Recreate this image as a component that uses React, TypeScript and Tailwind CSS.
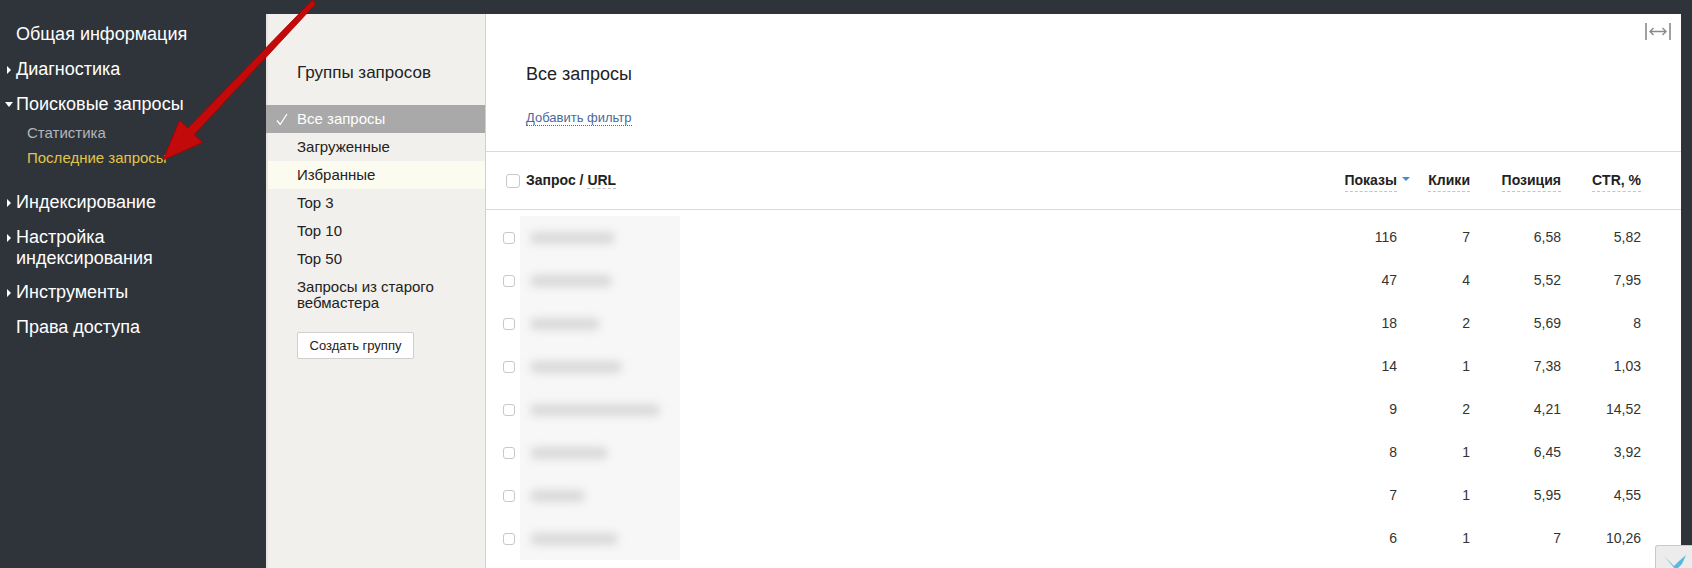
import React from 'react'

const rows = [
  { shows: '116', clicks: '7', pos: '6,58', ctr: '5,82', bar: 85 },
  { shows: '47', clicks: '4', pos: '5,52', ctr: '7,95', bar: 82 },
  { shows: '18', clicks: '2', pos: '5,69', ctr: '8', bar: 70 },
  { shows: '14', clicks: '1', pos: '7,38', ctr: '1,03', bar: 92 },
  { shows: '9', clicks: '2', pos: '4,21', ctr: '14,52', bar: 130 },
  { shows: '8', clicks: '1', pos: '6,45', ctr: '3,92', bar: 78 },
  { shows: '7', clicks: '1', pos: '5,95', ctr: '4,55', bar: 55 },
  { shows: '6', clicks: '1', pos: '7', ctr: '10,26', bar: 88 },
]

function Arrow({ open }: { open?: boolean }) {
  return (
    <span className="w-[16px] h-[21px] shrink-0 flex items-center pl-[7px]">
      {open ? (
        <span className="w-0 h-0 border-x-[4px] border-x-transparent border-t-[5px] border-t-white -ml-[2px]" />
      ) : (
        <span className="w-0 h-0 border-y-[4px] border-y-transparent border-l-[4px] border-l-white" />
      )}
    </span>
  )
}

function NavItem({ children, arrow, open, className = '' }: { children: React.ReactNode; arrow?: boolean; open?: boolean; className?: string }) {
  return (
    <div className={`flex items-start text-[18px] leading-[21px] text-white ${className}`}>
      {arrow ? <Arrow open={open} /> : <span className="w-[16px] shrink-0" />}
      <span>{children}</span>
    </div>
  )
}

function Checkbox({ size = 14 }: { size?: number }) {
  return (
    <span
      className={`shrink-0 rounded-[3px] border border-[#c8c8c8] bg-white ${size === 14 ? 'w-[14px] h-[14px]' : 'w-[12px] h-[12px]'}`}
    />
  )
}

export default function App() {
  return (
    <div className="relative flex h-[568px] w-[1692px] overflow-hidden bg-[#2f343b] font-['Liberation_Sans',Arial,sans-serif]">
      {/* sidebar */}
      <div className="w-[266px] shrink-0 pt-[24px]">
        <NavItem>Общая информация</NavItem>
        <NavItem arrow className="mt-[14px]">Диагностика</NavItem>
        <NavItem arrow open className="mt-[14px]">Поисковые запросы</NavItem>
        <div className="pl-[27px] mt-[9px] text-[15px] leading-[18px] text-[#b3b6ba]">Статистика</div>
        <div className="pl-[27px] mt-[7px] text-[15px] leading-[18px] text-[#e3c548]">Последние запросы</div>
        <NavItem arrow className="mt-[25px]">Индексирование</NavItem>
        <NavItem arrow className="mt-[14px]">
          Настройка
          <br />
          индексирования
        </NavItem>
        <NavItem arrow className="mt-[13px]">Инструменты</NavItem>
        <NavItem className="mt-[14px]">Права доступа</NavItem>
      </div>

      <div className="flex flex-1 pt-[14px] pr-[11px]">
        {/* groups panel */}
        <div className="w-[220px] shrink-0 bg-[#f1f0ec] border-l-2 border-l-[#e6e5e1] border-r border-r-[#cfcfcf] text-[#222]">
          <div className="pl-[29px] pt-[49px] text-[17px] leading-[20px]">Группы запросов</div>
          <div className="mt-[22px] text-[15px]">
            <div className="relative h-[28px] flex items-center bg-[#a9a9a9] text-white -ml-[2px] pl-[31px]">
              <svg className="absolute left-[10px] top-[8px]" width="12" height="13" viewBox="0 0 12 13">
                <path d="M1 7.5 L4.2 11.5 L11 1" fill="none" stroke="#fff" strokeWidth="1.3" />
              </svg>
              Все запросы
            </div>
            <div className="h-[28px] flex items-center pl-[29px]">Загруженные</div>
            <div className="h-[28px] flex items-center pl-[29px] bg-[#fcfbef]">Избранные</div>
            <div className="h-[28px] flex items-center pl-[29px]">Top 3</div>
            <div className="h-[28px] flex items-center pl-[29px]">Top 10</div>
            <div className="h-[28px] flex items-center pl-[29px]">Top 50</div>
            <div className="pl-[29px] pt-[6px] leading-[16px]">
              Запросы из старого
              <br />
              вебмастера
            </div>
          </div>
          <div className="pl-[29px] mt-[21px]">
            <button className="w-[117px] h-[27px] bg-white border border-[#cfcfcf] rounded-[2px] text-[13px] text-[#222]">
              Создать группу
            </button>
          </div>
        </div>

        {/* main */}
        <div className="relative flex-1 bg-white text-[#222]">
          <svg className="absolute right-[10px] top-[9px]" width="26" height="17" viewBox="0 0 26 17">
            <path d="M1 0 V17 M25 0 V17" stroke="#8a8a8a" strokeWidth="1.6" />
            <path d="M5 8.5 H21 M8.5 5 L5 8.5 L8.5 12 M17.5 5 L21 8.5 L17.5 12" fill="none" stroke="#8a8a8a" strokeWidth="1.4" />
          </svg>

          <div className="pl-[40px] pt-[49px] pb-[25px] border-b border-[#dadada]">
            <div className="text-[18px] leading-[22px]">Все запросы</div>
            <div className="mt-[25px] flex">
              <span className="text-[13px] leading-[15px] text-[#4a6a9c] border-b border-dotted border-[#4a6a9c]">
                Добавить фильтр
              </span>
            </div>
          </div>

          <div className="grid grid-cols-[1fr_120px_73px_91px_80px] pr-[40px] h-[58px] items-center border-b border-[#dadada] text-[14px] font-bold">
            <div className="flex items-center gap-[6px] pl-[20px]">
              <Checkbox />
              <span>
                Запрос / <span className="border-b border-dashed border-[#c4c4c4]">URL</span>
              </span>
            </div>
            <div className="flex justify-end">
              <span className="relative border-b border-dashed border-[#c4c4c4]">
                Показы
                <span className="absolute left-full top-[7px] ml-[5px] w-0 h-0 border-x-[4px] border-x-transparent border-t-[4px] border-t-[#3f8fd0]" />
              </span>
            </div>
            <div className="flex justify-end">
              <span className="border-b border-dashed border-[#c4c4c4]">Клики</span>
            </div>
            <div className="flex justify-end">
              <span className="border-b border-dashed border-[#c4c4c4]">Позиция</span>
            </div>
            <div className="flex justify-end">
              <span className="border-b border-dashed border-[#c4c4c4]">CTR, %</span>
            </div>
          </div>

          <div className="pt-[6px] text-[14px] text-[#333]">
            {rows.map((r, i) => (
              <div key={i} className="grid grid-cols-[1fr_120px_73px_91px_80px] pr-[40px] h-[43px] items-center">
                <div className="flex items-center h-full pl-[17px] gap-[5px]">
                  <Checkbox size={12} />
                  <div className="h-full w-[160px] bg-[#f7f7f7] flex items-center pl-[10px]">
                    <div className="h-[12px] bg-[#d9d9d9] blur-[4px] rounded-full" style={{ width: r.bar }} />
                  </div>
                </div>
                <div className="text-right">{r.shows}</div>
                <div className="text-right">{r.clicks}</div>
                <div className="text-right">{r.pos}</div>
                <div className="text-right">{r.ctr}</div>
              </div>
            ))}
          </div>
        </div>
      </div>

      {/* scroll-up widget */}
      <div className="absolute right-0 bottom-0 w-[37px] h-[23px] border border-[#c9c9c9] border-r-0 border-b-0 rounded-tl-[3px] bg-[#ececec] overflow-hidden">
        <svg className="absolute left-[8px] top-[8px]" width="26" height="16" viewBox="0 0 26 16">
          <path d="M0 2 L10 12 L14 8 L22 1 L18 10 L12 16 Z" fill="#5ab7dd" />
        </svg>
      </div>

      {/* red annotation arrow */}
      <svg className="absolute left-0 top-0 pointer-events-none" width="340" height="180" viewBox="0 0 340 180">
        <polygon
          points="312.2,0.25 315.8,3.75 194.2,134.6 202.4,142.6 163,160 179.6,120.2 187.8,128.2"
          fill="#c20a0a"
          stroke="#a80000"
          strokeWidth="0.8"
          strokeLinejoin="round"
        />
      </svg>
    </div>
  )
}
